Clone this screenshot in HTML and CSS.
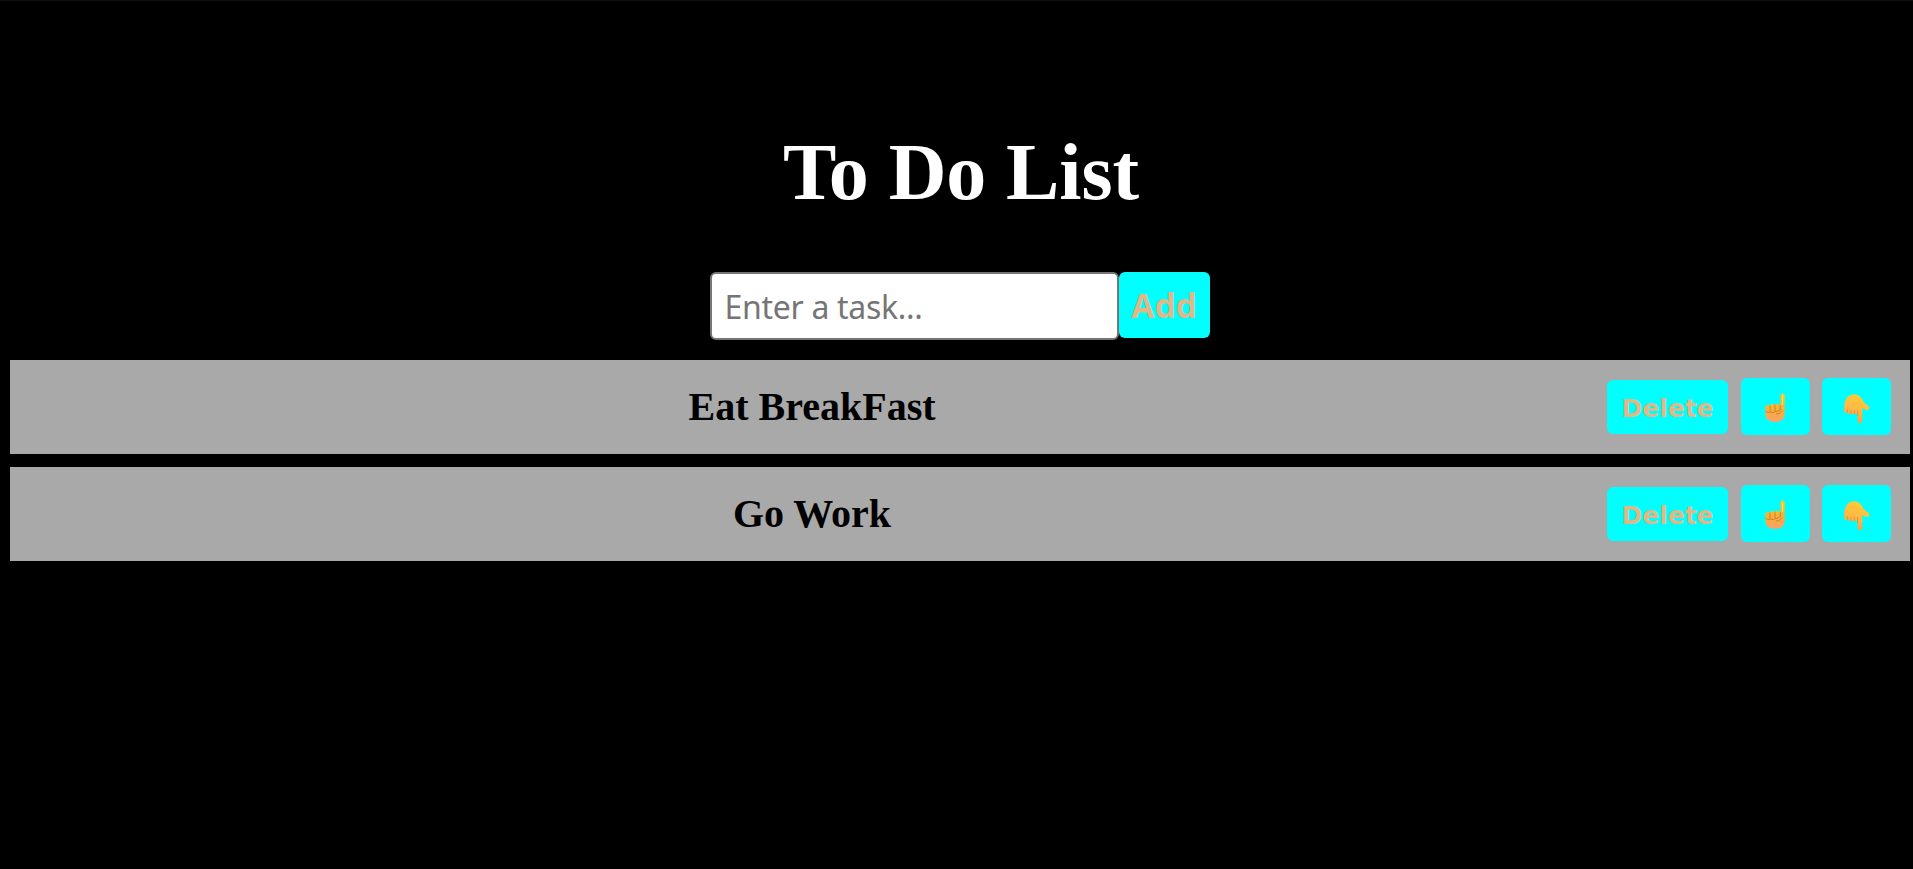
FILE: index.html
```html
<!DOCTYPE html>
<html lang="en">
<head>
<meta charset="utf-8">
<title>To Do List</title>
<link rel="stylesheet" href="styles.css">
</head>
<body>
<svg class="defs" width="0" height="0" aria-hidden="true">
  <defs>
    <linearGradient id="skin-up" x1="0" y1="0" x2="0" y2="1"><stop offset="0" stop-color="#ffc928"/><stop offset=".55" stop-color="#f5b037"/><stop offset="1" stop-color="#ffa06a"/></linearGradient>
    <linearGradient id="skin-down" x1=".6" y1="0" x2=".3" y2="1"><stop offset="0" stop-color="#ffcc35"/><stop offset=".55" stop-color="#ffb845"/><stop offset="1" stop-color="#f59a50"/></linearGradient>
    <symbol id="point-up" viewBox="-2.5 -1 28 30">
      <path d="M16 12V2.8Q16 .6 18.1 .6Q20.3.6 20.3 2.8V20Q20.2 29 10.7 29Q1.5 29 .7 21V14Q.8 12 2.7 12Q4.5 12 5 13Q5.4 11 7.5 11Q9.4 11 10 12Q10.7 10.7 12.8 10.7Q14.7 10.7 15.2 12.5Z" fill="url(#skin-up)"/>
      <path d="M5.5 13V18.2M10.5 12V18M15.8 12.5V16.5M1.2 18.6Q4 20.5 6 19Q8.5 20.5 11 18.5Q13 18.6 15.5 16.8M12 21Q15 22 17 18" fill="none" stroke="#b8652c" stroke-width="1" stroke-linecap="round" opacity=".6"/>
      <path d="M18 2.8V12" stroke="#ffdc55" stroke-width="1"/>
    </symbol>
    <symbol id="point-down" viewBox="0 -1.5 28 30">
      <path d="M1.3 11Q3 .6 11.3.7Q17.5.9 20.5 8.5L25.5 12.5Q27.2 14 25.5 16Q24 17.5 19.3 14.7V27Q19.3 29.6 17 29.6Q14.5 29.6 14.5 27V19.3Q13.5 21.3 11.5 20.2Q9.7 21.7 7.8 19.7Q5.8 21.4 4.5 19Q1.7 20.5 1.2 17.3Z" fill="url(#skin-down)"/>
      <path d="M4.6 16V19M8 17V20M11.6 17V20.3M14.5 17V22" fill="none" stroke="#d98235" stroke-width="1" stroke-linecap="round" opacity=".6"/>
    </symbol>
  </defs>
</svg>
<main class="app">
  <h1 class="title">To Do List</h1>
  <div class="entry">
    <input class="task-input" type="text" placeholder="Enter a task...">
    <button class="btn add">Add</button>
  </div>
  <ol class="tasks">
    <li class="task">
      <span class="task-text">Eat BreakFast</span>
      <button class="btn delete">Delete</button>
      <button class="btn move" aria-label="Move up"><svg class="hand"><use href="#point-up"/></svg></button>
      <button class="btn move" aria-label="Move down"><svg class="hand"><use href="#point-down"/></svg></button>
    </li>
    <li class="task">
      <span class="task-text">Go Work</span>
      <button class="btn delete">Delete</button>
      <button class="btn move" aria-label="Move up"><svg class="hand"><use href="#point-up"/></svg></button>
      <button class="btn move" aria-label="Move down"><svg class="hand"><use href="#point-down"/></svg></button>
    </li>
  </ol>
</main>
</body>
</html>
```
FILE: styles.css
```css
* { box-sizing: border-box; }
html { background: #000; }
body {
  margin: 0;
  height: 100vh;
  overflow: hidden;
  background: #000;
  border-top: 1px solid #111;
}
.defs { position: absolute; }
.app { padding: 125px 3px 0 10px; }
.title {
  margin: 0;
  height: 92px;
  padding-left: 2px;
  color: #fff;
  text-align: center;
  font: bold 80px/93px "Liberation Serif", serif;
  letter-spacing: -0.1px;
}
.entry {
  display: flex;
  justify-content: center;
  align-items: flex-start;
  margin-top: 54px;
}
.task-input {
  width: 409px;
  height: 68px;
  padding: 0 13px 0 12.5px;
  border: 2px solid #767676;
  border-radius: 6px;
  background: #fff;
  font: 32px "Noto Sans", sans-serif;
  letter-spacing: -0.3px;
}
.task-input::placeholder { color: #757575; }
.btn {
  border: 0;
  padding: 0;
  border-radius: 6px;
  background: #0ff;
  color: burlywood;
  font-family: "DejaVu Sans", sans-serif;
  font-weight: bold;
  flex: none;
}
.add {
  width: 91px;
  height: 66px;
  padding-right: 1px;
  font-family: "Noto Sans", sans-serif;
  font-size: 33.5px;
}
.tasks {
  list-style: none;
  margin: 20px 0 0;
  padding: 0;
  display: grid;
  gap: 13px;
}
.task {
  display: flex;
  align-items: center;
  height: 94px;
  padding-right: 19px;
  background: #a9a9a9;
}
.task-text {
  flex: 1;
  padding-left: 7px;
  text-align: center;
  font: bold 40px/46px "Liberation Serif", serif;
}
.delete { width: 121px; height: 54px; padding-top: 2px; font-size: 25px; margin-right: 13px; }
.move {
  width: 69px;
  height: 57px;
  margin-bottom: 1px;
  display: flex;
  justify-content: center;
  align-items: center;
}
.move + .move { margin-left: 12px; }
.hand { width: 28px; height: 30px; overflow: visible; }
#point-up, #point-down { overflow: visible; }
```
